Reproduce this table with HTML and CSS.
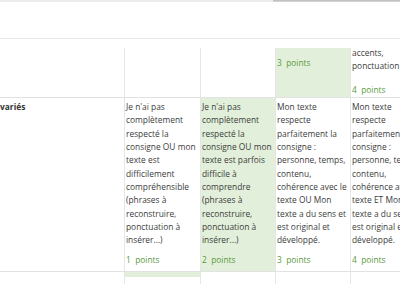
FILE: index.html
```html
<!DOCTYPE html>
<html lang="fr">
<head>
<meta charset="utf-8">
<title>Grille d'évaluation</title>
<link rel="stylesheet" href="styles.css">
</head>
<body>
<div class="app">
  <div class="scrollbar"><span class="track"></span><span class="thumb"></span></div>
  <div class="toolbar"></div>
  <div class="viewport">
    <div class="grid">
      <div class="row row-top">
        <div class="label"></div>
        <div class="cell"></div>
        <div class="cell"></div>
        <div class="cell green top-pts"><p class="pts">3&nbsp; points</p></div>
        <div class="cell top-desc"><p class="desc">accents,<br>ponctuation</p><p class="pts">4&nbsp; points</p></div>
      </div>
      <div class="row row-main">
        <div class="label"><b>variés</b></div>
        <div class="cell"><p class="desc">Je n'ai pas<br>complètement<br>respecté la<br>consigne OU mon<br>texte est<br>difficilement<br>compréhensible<br>(phrases à<br>reconstruire,<br>ponctuation à<br>insérer...)</p><p class="pts">1&nbsp; points</p></div>
        <div class="cell green"><p class="desc">Je n'ai pas<br>complètement<br>respecté la<br>consigne OU mon<br>texte est parfois<br>difficile à<br>comprendre<br>(phrases à<br>reconstruire,<br>ponctuation à<br>insérer...)</p><p class="pts">2&nbsp; points</p></div>
        <div class="cell"><p class="desc">Mon texte<br>respecte<br>parfaitement la<br>consigne :<br>personne, temps,<br>contenu,<br>cohérence avec le<br>texte OU Mon<br>texte a du sens et<br>est original et<br>développé.</p><p class="pts">3&nbsp; points</p></div>
        <div class="cell"><p class="desc">Mon texte<br>respecte<br>parfaitement la<br>consigne :<br>personne, temps,<br>contenu,<br>cohérence avec le<br>texte ET Mon<br>texte a du sens et<br>est original et<br>développé.</p><p class="pts">4&nbsp; points</p></div>
      </div>
      <div class="row row-next">
        <div class="label"></div>
        <div class="cell green"></div>
        <div class="cell"></div>
        <div class="cell"></div>
        <div class="cell"></div>
      </div>
      <div class="row row-last">
        <div class="label"></div>
        <div class="cell"></div>
        <div class="cell"></div>
        <div class="cell"></div>
        <div class="cell"></div>
      </div>
    </div>
  </div>
</div>
</body>
</html>
```

FILE: styles.css
```css
* { box-sizing: border-box; }
html, body { margin: 0; padding: 0; background: #fff; }
body {
  font-family: "Open Sans", "Noto Sans", sans-serif;
  font-size: 8.4px;
  line-height: 13.333px;
  color: #3c3c3c;
  width: 400px;
  height: 284px;
  overflow: hidden;
}
.app { width: 400px; height: 284px; overflow: hidden; }
.scrollbar { display: flex; height: 2px; }
.scrollbar .track { width: 273px; background: #ededed; }
.scrollbar .thumb { flex: 1; background: linear-gradient(#b9b9b9, #dcdcdc); }
.toolbar { height: 37px; border-bottom: 1px solid #e6e6e6; }
.viewport { margin-top: 9px; height: 236px; overflow: hidden; }
.grid { width: 425px; }
.row {
  display: grid;
  grid-template-columns: 124px 76px 75px 75px 75px;
  border-bottom: 1px solid #e2e2e2;
}
.row-top { height: 50px; }
.row-main { height: 174px; }
.row-next { height: 5px; border-bottom: 0; }
.row-last { height: 20px; border-bottom: 0; }
.label { padding: 2px 0 0 0; overflow: hidden; white-space: nowrap; }
.label b { font-weight: 700; color: #333; }
.cell {
  border-left: 1px solid #e6e6e6;
  padding: 2px 1px 5px 1px;
  display: flex;
  flex-direction: column;
  justify-content: space-between;
  white-space: nowrap;
  overflow: hidden;
}
.row-next .cell, .row-last .cell { padding: 0; }
.green { background: #e2efda; }
.desc, .pts { margin: 0; }
.pts { color: #5a9a3c; white-space: pre; }
.row-top .cell { padding: 0 1px; justify-content: flex-start; overflow: visible; }
.top-pts .pts { margin-top: 8.3px; }
.top-desc .desc { margin-top: -2.2px; }
.top-desc .pts { margin-top: 10.3px; }
```
